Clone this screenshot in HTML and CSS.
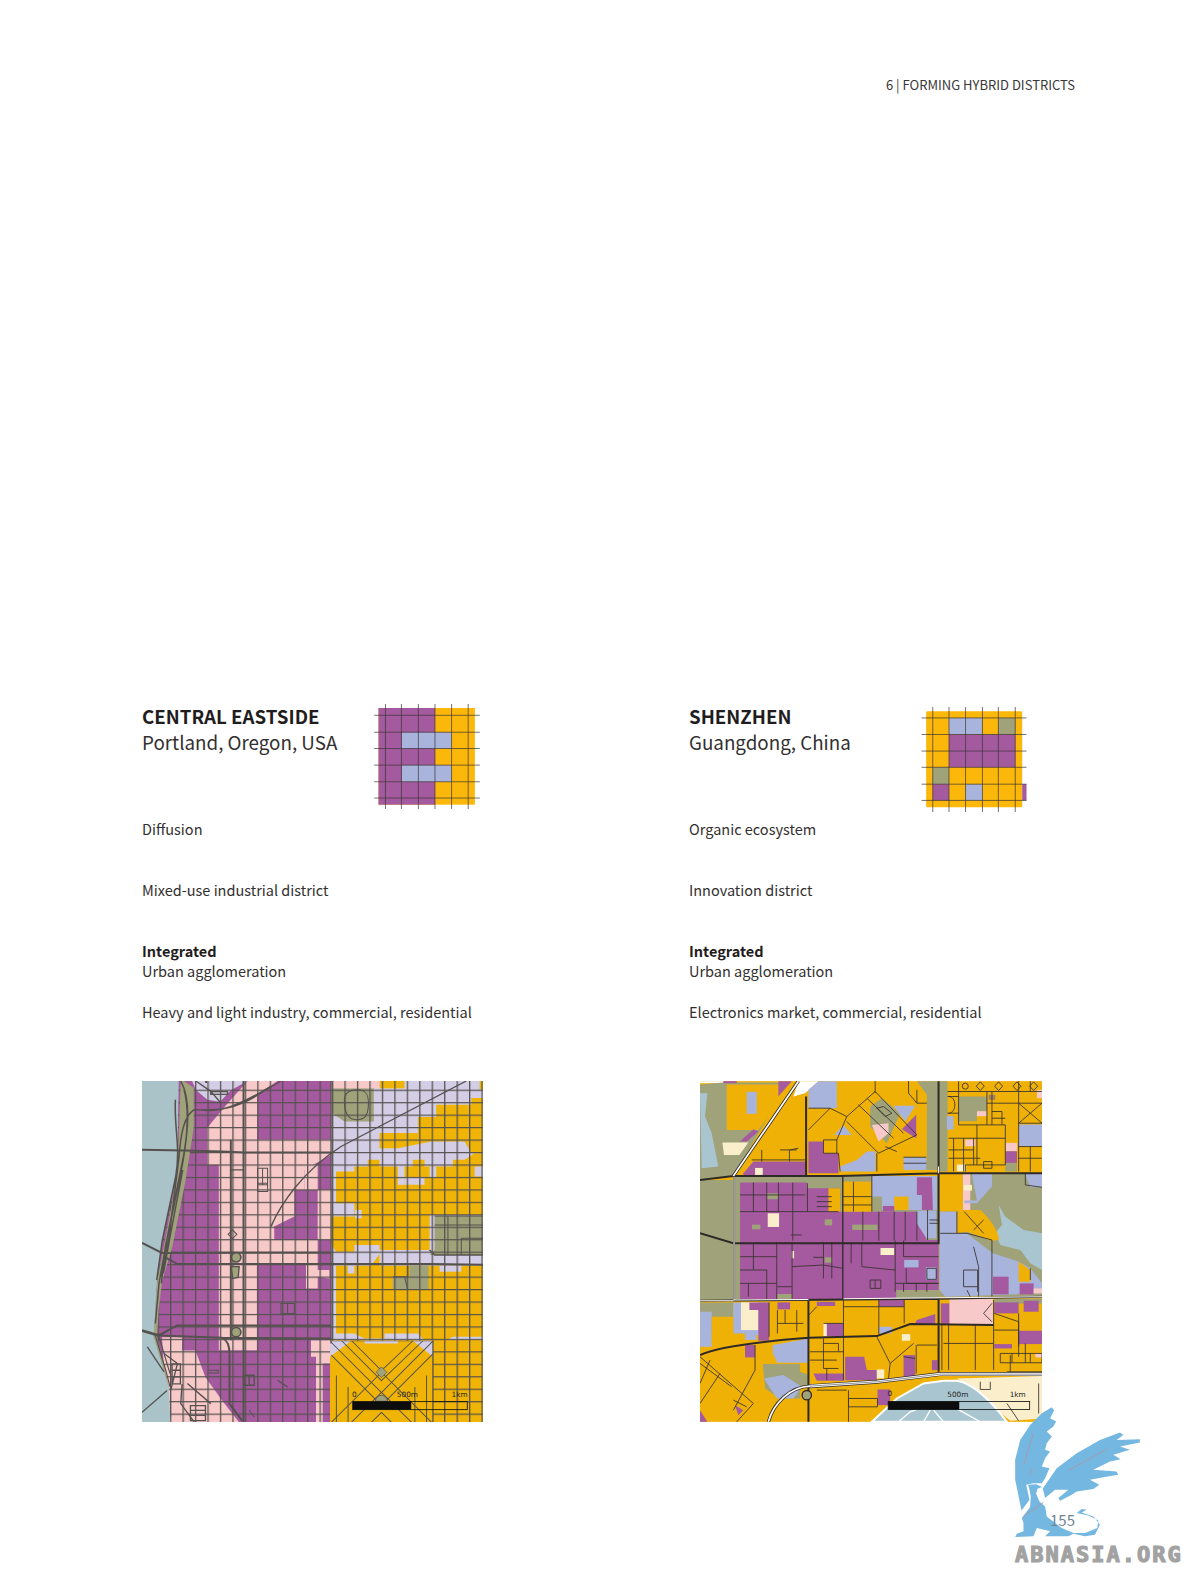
FILE: index.html
```html
<!DOCTYPE html>
<html lang="en">
<head>
    <meta charset="UTF-8">
    <title>6 | Forming Hybrid Districts</title>
    <link rel="stylesheet" href="styles.css">
</head>
<body>
    <div class="page">
        <div class="running-head">6 | FORMING HYBRID DISTRICTS</div>
        <div class="cases">
            <div class="case">
                <div class="case-head">
                    <div class="case-title">
                        <h2>CENTRAL EASTSIDE</h2>
                        <div class="place">Portland, Oregon, USA</div>
                    </div>
                    <svg class="matrix" viewBox="732 42 318 316">
                        <rect class="c-yellow" x="745" y="54" width="290" height="291"/>
                        <rect class="c-purple" x="745" y="54" width="170" height="291"/>
                        <rect class="c-blue" x="815" y="127" width="150" height="49"/>
                        <rect class="c-blue" x="815" y="226" width="150" height="50"/>
                        <path class="matrix-lines" d="M766 42V358M814 42V358M865 42V358M915 42V358M965 42V358M1015 42V358M732 76H1050M732 127H1050M732 176H1050M732 226H1050M732 276H1050M732 325H1050"/>
                    </svg>
                </div>
                <div class="case-text">
                    <p class="gap-2">Diffusion</p>
                    <p class="gap-2">Mixed-use industrial district</p>
                    <p class="gap-1"><strong>Integrated</strong><br>Urban agglomeration</p>
                    <p>Heavy and light industry, commercial, residential</p>
                </div>
                <svg class="map" viewBox="34 34 1021 1021">
                    <defs>
                        <pattern id="streets" patternUnits="userSpaceOnUse" x="6" y="22.7" width="37.3" height="37.3">
                            <path d="M2 0V37.3M0 2H37.3" fill="none" stroke="#55514f" stroke-width="3.8"/>
                        </pattern>
                        <clipPath id="star-clip"><rect x="597" y="812" width="310" height="243"/></clipPath>
                    </defs>
                    <rect x="34" y="34" width="1021" height="1021" fill="#efb406"/>
                    <!-- lavender and yellow east of the avenue -->
                    <rect x="600" y="34" width="455" height="776" fill="#d3cee5"/>
                    <g fill="#efb406">
                        <path d="M745 34H820V56H745Z"/>
                        <path d="M1045 34H1055V60H1045Z"/>
                        <path d="M745 190H860V142H915V105H1020V85H1055V250H1020L1000 215H900L800 235H745Z"/>
                        <path d="M615 305H670V290H710V270H745V290H800V325H820V345H880V322H820V290H845V270H880V290H965V270H1000L1030 250H1055V435H895V540H745V525H670V545H615L600 520V440H670V400H615Z"/>
                        <path d="M615 587H650V610H670V587H720L745 552V587H1055V605H1055V800H965L945 810H880L860 790H760V805H700L670 790H615Z"/>
                        <path d="M1000 270H1055V300H1000Z"/>
                        <path d="M905 810H1055V1055H905Z"/>
                    </g>
                    <g fill="#d3cee5">
                        <path d="M800 325H820V345H800Z"/>
                        <path d="M895 290H915V322H895Z"/>
                        <path d="M672 420H692V445H672Z"/>
                        <path d="M1030 290H1055V320H1030Z"/>
                        <path d="M925 587H990V605H925Z"/>
                    </g>
                    <path d="M910 438H1055V555H895L910 540Z" fill="#a0a27a"/>
                    <path d="M835 587H892V658H785V620H835Z" fill="#a0a27a"/>
                    <path d="M602 56H728V155H640L602 130Z" fill="#a0a27a"/>
                    <path d="M600 34H745V56H600Z" fill="#f7c9c8"/>
                    <!-- purple ground west of the avenue, pink over it -->
                    <rect x="34" y="34" width="566" height="1021" fill="#a55a9f"/>
                    <path d="M184 34H350L300 62L268 96L230 90L196 62Z" fill="#d3cee5"/>
                    <path d="M350 34H440L379 74V210H600V255L520 300V360H490V440L430 470V510H560V600H595V625L560 620V655H525V585H378V840H264V285H229V175L262 134L300 90Z" fill="#f7c9c8"/>
                    <path d="M490 285H560V360H520V300Z" fill="#f7c9c8"/>
                    <path d="M560 360H600V510H560Z" fill="#f7c9c8"/>
                    <path d="M94 801H154V841H194L224 921L274 991L324 1055H110L100 900Z" fill="#f7c9c8"/>
                    <path d="M540 810H597V880H575V1055H555V860H540Z" fill="#f7c9c8"/>
                    <rect x="34" y="34" width="1021" height="1021" fill="url(#streets)"/>
                    <!-- star of diagonal streets -->
                    <rect x="597" y="812" width="308" height="243" fill="#efb406"/>
                    <path d="M597 812H660L597 860ZM905 812H845L905 860ZM700 812H800V820H700Z" fill="#d3cee5"/>
                    <g clip-path="url(#star-clip)" fill="none" stroke="#55514f" stroke-width="3">
                        <path d="M631 811L751 931L876 811M601 817L751 967L905 813M661 811L751 901L846 811M601 855L751 1005L905 851"/>
                        <path d="M751 906L601 1056M751 906L901 1056M751 966L661 1056M751 966L841 1056M751 1026L721 1056M751 1026L781 1056"/>
                        <path d="M616 916V1055M651 950V1055M886 916V1055M851 950V1055M597 812H905"/>
                    </g>
                    <path d="M905 812V1055" stroke="#55514f" stroke-width="3.5"/>
                    <path d="M751 890L767 906L751 922L735 906Z" fill="#a0a27a" stroke="#55514f" stroke-width="2"/>
                    <path d="M733 993A18 18 0 0 1 769 993Z" fill="#a0a27a" stroke="#55514f" stroke-width="2.5"/>
                    <!-- river and its bank -->
                    <path d="M159 34L189 54V174L164 334L124 534L94 634L84 720L79 801L115 950H100L68 810L80 630L105 500L140 310L150 34Z" fill="#a0a27a"/>
                    <path d="M34 34H144L139 314L94 514L79 634L69 801L114 951L119 1055H34Z" fill="#a9c3c9"/>
                    <path d="M150 34C182 90 172 200 150 300L110 500L85 640L74 760M160 60C176 120 170 220 146 330L104 530L92 640M134 90C130 180 150 230 135 320L95 510L78 630M190 120C160 140 150 190 145 260L115 500L92 620M156 300L118 500L98 610" fill="none" stroke="#55514f" stroke-width="4.5"/>
                    <path d="M72 790L105 900L118 950M82 790L118 910" fill="none" stroke="#55514f" stroke-width="3.5"/>
                    <path d="M34 1026L109 961M50 830L100 905" fill="none" stroke="#55514f" stroke-width="4"/>
                    <!-- main roads -->
                    <g fill="none" stroke="#55514f">
                        <path stroke-width="6" d="M34 240L160 242L275 245L340 248H600M34 519L94 549L600 548M100 560L140 582H900L1055 584M84 796L139 766H600"/>
                        <path stroke-width="8" d="M34 781L84 796"/>
                        <path stroke-width="6" d="M84 796L274 803C290 810 296 830 296 850V1001L334 1051M274 803L600 805"/>
                        <path stroke-width="6" d="M300 210V810M338 34V1055M226 40V34"/>
                        <path stroke-width="4" d="M600 34V820M195 34L240 65L270 100M420 470C450 400 520 300 630 230L1005 34M190 120C240 120 300 130 390 70L450 34M210 120C260 130 320 110 420 50M300 300H338M895 540L910 555H1055M240 66H290V74H240Z"/>
                        <path stroke-width="3" d="M640 92C640 65 660 60 680 60C705 60 712 75 712 100C712 140 700 150 675 150C650 150 640 130 640 92ZM910 438H1055M950 438V555M910 465H1055M990 505H1055M990 505V555M830 587V620L785 620M820 620L830 660M380 295H410V345H380ZM395 295V345M380 340H410V365H380ZM305 480L318 493L305 506L292 493Z"/>
                        <path stroke-width="4" d="M179 1006H224V1051H179ZM179 1020H224M179 1035H224M124 881H149V941H124ZM124 900H149M124 920H149M100 850L140 880L120 960M154 941L150 1000L190 1055M170 940L240 1000M340 915H370V945H340ZM355 915V945M440 930L470 950"/>
                        <path stroke-width="3" d="M232 900H262V908H232M355 1020L370 1040M450 700H490V730H450ZM470 700V730"/>
                    </g>
                    <circle cx="316" cy="562" r="14" fill="#a0a27a" stroke="#55514f" stroke-width="5"/>
                    <path d="M302 590H325L322 622L305 625Z" fill="#a0a27a" stroke="#55514f" stroke-width="4"/>
                    <circle cx="316" cy="786" r="14" fill="#a0a27a" stroke="#55514f" stroke-width="5"/>
                    <!-- scale bar -->
                    <rect x="665" y="994" width="343" height="24" fill="none" stroke="#111" stroke-width="2.5"/>
                    <rect x="665" y="994" width="175" height="24" fill="#0c0c0c"/>
                    <text class="scale" x="663" y="979">0</text>
                    <text class="scale" x="797" y="981">500m</text>
                    <text class="scale" x="961" y="981">1km</text>
                </svg>
            </div>
            <div class="case">
                <div class="case-head">
                    <div class="case-title">
                        <h2>SHENZHEN</h2>
                        <div class="place">Guangdong, China</div>
                    </div>
                    <svg class="matrix matrix-low" viewBox="723 50 317 317">
                        <rect class="c-yellow" x="737" y="63" width="290" height="290" rx="4"/>
                        <rect class="c-blue" x="806" y="83" width="100" height="50"/>
                        <rect class="c-olive" x="955" y="83" width="51" height="50"/>
                        <rect class="c-purple" x="806" y="133" width="200" height="99"/>
                        <rect class="c-olive" x="757" y="232" width="49" height="51"/>
                        <rect class="c-purple" x="757" y="283" width="49" height="49"/>
                        <rect class="c-blue" x="856" y="283" width="51" height="49"/>
                        <rect class="c-purple" x="1027" y="283" width="13" height="49"/>
                        <path class="matrix-lines" d="M757 50V367M806 50V367M856 50V367M907 50V367M955 50V367M1006 50V367M723 83H1040M723 133H1040M723 183H1040M723 232H1040M723 283H1040M723 332H1040"/>
                    </svg>
                </div>
                <div class="case-text">
                    <p class="gap-2">Organic ecosystem</p>
                    <p class="gap-2">Innovation district</p>
                    <p class="gap-1"><strong>Integrated</strong><br>Urban agglomeration</p>
                    <p>Electronics market, commercial, residential</p>
                </div>
                <svg class="map map-inset" viewBox="30 34 1025 1021">
                    <rect x="30" y="34" width="1025" height="1021" fill="#efb106"/>
                    <path d="M30 34H100V40H30Z" fill="#fff"/>
                    <!-- west edge -->
                    <path d="M30 44L100 38H265V60L240 130L130 320L30 330Z" fill="#a0a27a"/>
                    <path d="M30 330H130V690H30Z" fill="#a0a27a"/>
                    <path d="M30 70H52L45 140L65 190L75 240L85 290L35 295Z" fill="#a9c6d0"/>
                    <path d="M110 44H265V100L205 180H110Z" fill="#efb106"/>
                    <path d="M100 34H140V40H100Z" fill="#a55a9f"/>
                    <path d="M170 66H200V132H170Z" fill="#a9b4dc"/>
                    <path d="M150 215L190 178L205 185L170 215Z" fill="#a55a9f"/>
                    <path d="M97 218H175L148 255H102Z" fill="#fbeecb"/>
                    <path d="M265 34H305L265 80Z" fill="#a55a9f"/>
                    <path d="M160 310L190 275H350V315H160Z" fill="#a55a9f"/>
                    <path d="M195 294H218V315H195Z" fill="#fbeecb"/>
                    <path d="M325 34L385 34L345 70L310 80Z" fill="#fff"/>
                    <!-- top centre -->
                    <path d="M355 60L385 34H440V115H355Z" fill="#a9b4dc"/>
                    <path d="M552 34H680L710 75V270L680 300H745V34Z" fill="#a0a27a"/>
                    <path d="M355 215H400V250H445V310H355Z" fill="#a55a9f"/>
                    <path d="M450 290L500 270L530 245H556V305H450Z" fill="#a9b4dc"/>
                    <path d="M640 262H708V300H640Z" fill="#a9b4dc"/>
                    <path d="M540 110L575 85L630 130L590 220L540 170Z" fill="#a0a27a"/>
                    <path d="M545 165L595 160V190L565 215Z" fill="#f7c9c8"/>
                    <path d="M610 108H675L645 155Z" fill="#a9b4dc"/>
                    <path d="M678 135V205L635 178Z" fill="#a55a9f"/>
                    <path d="M432 195L460 165L485 195Z" fill="#a9b4dc"/>
                    <!-- top right block -->
                    <path d="M745 34H772V305H745Z" fill="#a0a27a"/>
                    <path d="M805 80H890V124H860V154H805Z" fill="#a0a27a"/>
                    <path d="M985 164H1055V229H985Z" fill="#a9b4dc"/>
                    <path d="M945 219H980V244H945Z" fill="#f7c9c8"/>
                    <path d="M945 244H980V279H945Z" fill="#a55a9f"/>
                    <path d="M945 279H980V305H945Z" fill="#a0a27a"/>
                    <path d="M825 209H855V229H825Z" fill="#f7c9c8"/>
                    <path d="M860 124H890V139H860Z" fill="#f7c9c8"/>
                    <path d="M800 284H825V304H800Z" fill="#fbeecb"/>
                    <path d="M770 139H790V179H770Z" fill="#a9b4dc"/>
                    <path d="M1040 60H1055V85H1040Z" fill="#f7c9c8"/>
                    <path d="M895 75H915V90H895Z" fill="#a0815c"/>
                    <!-- central superblocks -->
                    <rect x="130" y="318" width="618" height="372" rx="10" fill="#a0a27a"/>
                    <path d="M150 338H350V355H450V425H680V460L708 470V510H745V660H618V665H618V688H306V672H262V688H150Z" fill="#a55a9f"/>
                    <path d="M457 335H545V425H457Z" fill="#efb106"/>
                    <path d="M415 355H450V425H415Z" fill="#efb106"/>
                    <path d="M545 318H740V420H575V380H545Z" fill="#a9b4dc"/>
                    <path d="M680 322H725L728 420H695V375H680Z" fill="#a55a9f"/>
                    <path d="M612 380H655V420H612Z" fill="#efb106"/>
                    <path d="M680 422H738V505H708L680 460Z" fill="#a9b4dc"/>
                    <path d="M578 408H612V425H578Z" fill="#a55a9f"/>
                    <g fill="#a0a27a">
                        <rect x="231" y="370" width="34" height="18"/>
                        <rect x="186" y="464" width="25" height="14"/>
                        <rect x="404" y="448" width="22" height="18"/>
                        <rect x="486" y="464" width="76" height="16"/>
                        <rect x="404" y="562" width="22" height="16"/>
                        <rect x="262" y="672" width="44" height="16"/>
                    </g>
                    <g fill="#fbeecb">
                        <rect x="233" y="430" width="34" height="41"/>
                        <rect x="571" y="534" width="41" height="21"/>
                        <rect x="305" y="543" width="7" height="22"/>
                    </g>
                    <path d="M642 570H685V592H642Z" fill="#a9b4dc"/>
                    <path d="M707 592H738V630H707Z" fill="#a9b4dc"/>
                    <!-- east wetland -->
                    <path d="M748 310H1055V680H748Z" fill="#a0a27a"/>
                    <path d="M748 312H818V425H748Z" fill="#efb106"/>
                    <path d="M818 312H840V420H818Z" fill="#f7c9c8"/>
                    <path d="M820 345H845V362H820Z" fill="#fbeecb"/>
                    <path d="M845 312H905V350L860 400H822V392H860Z" fill="#a9b4dc"/>
                    <path d="M925 405L945 440L1000 480L1055 490V600L1020 580L990 540L930 525L915 490L935 465Z" fill="#a9c6d0"/>
                    <path d="M1005 312H1055V352H1020Z" fill="#a9b4dc"/>
                    <path d="M748 425H800V490H748Z" fill="#a9b4dc"/>
                    <path d="M800 490V425L822 420H870C895 440 930 490 925 510L905 512L830 485Z" fill="#efb106"/>
                    <path d="M748 490L830 490L875 525L908 550L985 575L1020 595L1055 640V670L840 678L765 680L748 660Z" fill="#a9b4dc"/>
                    <path d="M985 575L1020 600V635H985Z" fill="#efb106"/>
                    <path d="M908 620H955V673H908Z" fill="#a55a9f"/>
                    <path d="M988 640H1030V673H988Z" fill="#a55a9f"/>
                    <path d="M1030 655H1055V670H1030Z" fill="#f7c9c8"/>
                    <!-- south half -->
                    <path d="M30 697H130V790H30Z" fill="#a0a27a"/>
                    <path d="M30 725H65V830H30Z" fill="#a9b4dc"/>
                    <path d="M65 740H130V820H65Z" fill="#efb106"/>
                    <path d="M130 697H237V795H200V810H165V790H130Z" fill="#a9b4dc"/>
                    <path d="M153 697H205V780H153Z" fill="#fbeecb"/>
                    <path d="M178 697H237V812H205V720H178Z" fill="#a55a9f"/>
                    <path d="M262 697H300V718H262Z" fill="#a55a9f"/>
                    <path d="M248 825L356 805V878H262L248 850Z" fill="#a9b4dc"/>
                    <path d="M218 882H330V905L356 915V950H330V985H270L225 955Z" fill="#a0a27a"/>
                    <path d="M222 925L280 915L335 950L310 985H260Z" fill="#a9b4dc"/>
                    <path d="M165 825H195V862H165Z" fill="#a55a9f"/>
                    <path d="M405 760H460V798H405Z" fill="#a55a9f"/>
                    <path d="M400 760H410V798H400Z" fill="#fbeecb"/>
                    <path d="M380 695H435V708H380Z" fill="#a55a9f"/>
                    <path d="M566 690H642V710H566Z" fill="#a55a9f"/>
                    <path d="M680 750L735 732V765H672Z" fill="#a55a9f"/>
                    <path d="M566 770H605V790H566Z" fill="#a9b4dc"/>
                    <path d="M635 792H660V812H635Z" fill="#fbeecb"/>
                    <path d="M465 860H522L530 900H560V930H465Z" fill="#a55a9f"/>
                    <path d="M560 898H582V925H560Z" fill="#fbeecb"/>
                    <path d="M640 855H675V920H640Z" fill="#a55a9f"/>
                    <path d="M725 870H742V900H725Z" fill="#a55a9f"/>
                    <path d="M370 910H462V932H380Z" fill="#a55a9f"/>
                    <path d="M752 700H778V762H752Z" fill="#a55a9f"/>
                    <path d="M778 685H908V762H778Z" fill="#f7c9c8"/>
                    <path d="M912 685H1055V700H912Z" fill="#a0a27a"/>
                    <path d="M912 697H985V730H912Z" fill="#a55a9f"/>
                    <path d="M1000 692H1045V725H1000Z" fill="#a55a9f"/>
                    <path d="M985 782H1055V822H985Z" fill="#a55a9f"/>
                    <path d="M912 822H965V835H912Z" fill="#a55a9f"/>
                    <path d="M1035 850H1055V862H1035Z" fill="#f7c9c8"/>
                    <path d="M562 958H600V1005H562Z" fill="#a55a9f"/>
                    <path d="M135 1005L160 1020L145 1035Z" fill="#a55a9f"/>
                    <path d="M30 1020L52 1055H30Z" fill="#a55a9f"/>
                    <!-- bay and cream shore -->
                    <path d="M800 925L1055 918V1045L960 1052Z" fill="#fbeecb"/>
                    <path d="M545 1055L620 985L700 940L760 932H800C850 940 900 990 950 1055Z" fill="#a9c6d0" stroke="#fff" stroke-width="6"/>
                    <path d="M625 1055L660 1025L700 1010M700 1055L720 1020M790 1010L870 1055M730 1020L760 1055" fill="none" stroke="#fff" stroke-width="4"/>
                    <!-- minor streets -->
                    <path fill="none" stroke="#3a3330" stroke-width="2.6" d="M355 115H420L470 140L440 210L400 210V250H445M420 115L355 180M470 140L555 65L680 195L565 250L470 155M505 105L610 205M530 85L640 190M580 110L605 130L585 140L560 115ZM555 34V70M655 34V70L680 100V60M560 250V305M585 230L620 245M710 100L680 100M300 240L325 235M270 240H320M298 240V275M185 270H350M215 240V275M440 210V250M450 305L445 250M640 262H708M640 280H708"/>
                    <path fill="none" stroke="#3a3330" stroke-width="2.6" d="M772 65H1055M772 80H805M890 100H985M772 130H805M805 165H945V285H825V305M805 34V165M890 65V165M860 165V285M905 65V165M985 34V305M1020 34V65M775 205H945M775 240H850M775 265H870M790 205V305M820 205V305M850 205V285M985 230H1055M985 265H1055M1020 230V305M985 100L1055 160M985 160L1055 100M985 100H1055M985 160H1055M870 36L882 49L870 62L858 49ZM925 36L937 49L925 62L913 49ZM980 36L992 49L980 62L968 49ZM1030 36L1042 49L1030 62L1018 49ZM905 125L935 125L935 165M905 145H945M775 80C800 80 800 130 775 130M880 275H905V295H880Z"/>
                    <circle cx="825" cy="49" r="9" fill="none" stroke="#3a3330" stroke-width="2.6"/>
                    <path fill="none" stroke="#3a3330" stroke-width="2.6" d="M150 375H345M150 425H445M190 338V425M230 338V425M265 338V425M308 338V512M352 340V425M380 380H425M380 395H425M380 410H425M518 425V512M566 425V512M612 425V512M645 425V512M680 425V512M302 495H335M190 520V600M150 560H260M260 516V688M230 600V688M150 600H230M175 640V680M150 640H260M262 650H305M305 590L400 585L458 595M306 516V688M400 516V625M425 516V625M370 562H400M483 516V580M515 516V590L615 600M615 512V665M640 512V560M640 560L745 560M648 595V640H745M615 640H745M640 640V665M678 640V665M710 640V665M540 630H572V655H540ZM555 630V655M710 595H738V628H710Z"/>
                    <path fill="none" stroke="#3a3330" stroke-width="2.6" d="M545 318V425M490 335V425M457 380H545M457 405H545M712 420V510M718 450H745M718 460H745M800 425V490M822 425L880 490M850 480L880 450M750 490H830L905 510V680M850 530L865 590V680M820 600H862V650H820ZM830 660L840 680M862 650V665M1020 595V630M1005 312V345L1055 352"/>
                    <path fill="none" stroke="#3a3330" stroke-width="2.6" d="M237 697V800M262 720V790M285 720V760M262 760H340M320 720V785M380 710L356 735M460 690V930M566 690V795M642 690V760M566 710H642M460 710H566M400 760H460M360 845H460M400 805V895H445M400 820H445V845M360 870H440M410 895V930M560 800L600 880M600 880L670 820M600 880L595 925M680 825H740M678 825V910M640 860L675 865M745 690V900M755 765V900M775 765V900M855 765V900M910 690V900M760 820H910M912 730L985 755V860M985 730V830M912 780H985M930 850H1055V878H930ZM965 850V878M1005 820V878M1020 850V878M880 730L905 755M905 700L880 730M960 855V905M950 905H1055M30 860L190 1000L140 1055M60 870L30 940M30 880L125 950M90 910L30 1000M195 825V900L130 1020M130 990L170 1010M475 985H562V1010H475ZM475 960V1055M380 960H470M1045 940V1030M870 935V958H900V935M950 1000L985 1052"/>
                    <!-- main roads -->
                    <g fill="none">
                        <path stroke="#2e2a28" stroke-width="6" d="M132 322V690M30 330L130 318L450 318L745 310H1055M30 490L130 520H745V310M745 34V310M348 80V318M30 692L745 686L1055 680M745 686V905M355 690V1055M30 855C80 830 200 815 356 803L560 798L660 762L910 765"/>
                        <path stroke="#2e2a28" stroke-width="4" d="M458 320V690"/>
                        <path stroke="#fff" stroke-width="3" d="M132 322V690M30 692H130M130 690L355 688M460 686L1055 680M745 290V310"/>
                        <path stroke="#2e2a28" stroke-width="12" d="M360 948L560 935L750 912H1055"/>
                        <path stroke="#fff" stroke-width="8" d="M360 948L560 935L750 912H1055"/>
                        <path stroke="#2e2a28" stroke-width="1.5" d="M360 948L560 935L750 912H1055"/>
                        <path stroke="#2e2a28" stroke-width="10" d="M325 34L130 318M235 1055C250 1000 300 950 360 948"/>
                        <path stroke="#fff" stroke-width="5" d="M325 34L130 318M235 1055C250 1000 300 950 360 948"/>
                    </g>
                    <circle cx="350" cy="975" r="14" fill="#a0a27a" stroke="#2e2a28" stroke-width="4"/>
                    <!-- scale bar -->
                    <rect x="594" y="994" width="424" height="24" fill="none" stroke="#111" stroke-width="2.5"/>
                    <rect x="594" y="994" width="213" height="24" fill="#0c0c0c"/>
                    <text class="scale" x="592" y="977">0</text>
                    <text class="scale" x="771" y="981">500m</text>
                    <text class="scale" x="958" y="981">1km</text>
                </svg>
            </div>
        </div>
        <div class="watermark">
            <svg class="griffin" viewBox="0 0 564 460">
                <path class="griffin-body" d="M64 362L45 270L45 210L60 150L90 105L125 70L155 52L162 62L150 85L168 95L160 110L140 125L155 140L140 160L135 180L150 185L135 205L125 230L148 235L135 265L125 280L100 280L78 285L88 330Z"/>
                <path class="griffin-body" d="M128 296L170 235L230 190L300 150L360 128L370 135L350 150L420 148L420 158L360 170L390 180L340 195L362 208L330 215L280 240L350 245L355 255L310 262L270 270L298 285L280 298L230 305L215 315L180 333L175 325L205 300L165 300L135 325Z"/>
                <path class="griffin-body" d="M65 385L90 352L92 320L88 300L84 285L108 283L126 292L112 297L108 312L118 335L135 350L140 380L165 400L185 415L220 430L255 430L292 415L295 392L265 377L230 370L245 358L260 360L245 368L280 380L300 405L285 435L255 440L220 432L205 440L135 440L150 425L110 415L100 440L45 442L50 432L70 425L70 400Z"/>
                <path d="M100 130L70 225M320 178L205 242M130 338L70 380M95 235L88 255" fill="none" stroke="#a79bab" stroke-width="3"/>
            </svg>
            <span class="folio">155</span>
            <span class="brand">ABNASIA.ORG</span>
        </div>
    </div>
</body>
</html>
```

FILE: styles.css
```css
html, body {
    margin: 0;
    background: #fff;
}
.page {
    position: relative;
    width: 1188px;
    height: 1584px;
    box-sizing: border-box;
    padding: 75px 113px 0 142px;
    overflow: hidden;
    font-family: "Noto Sans CJK SC", "Noto Sans", sans-serif;
    color: #333030;
}
.running-head {
    font-size: 13px;
    line-height: 20px;
    text-align: right;
    color: #3a3838;
}
.cases {
    display: grid;
    grid-template-columns: 547px 1fr;
    margin-top: 608px;
}
.case-head {
    display: flex;
    height: 116px;
}
.case-title {
    width: 232px;
}
h2 {
    margin: 0;
    font-size: 18.7px;
    line-height: 26px;
    font-weight: 700;
    color: #1f1d1d;
}
.place {
    font-size: 18.8px;
    line-height: 26px;
    font-weight: 400;
}
.matrix {
    display: block;
    width: 106px;
    height: 105px;
    margin-top: 1px;
}
.matrix-low {
    margin-top: 4px;
}
.c-yellow { fill: #fbb80a; }
.c-purple { fill: #a35a9e; }
.c-blue { fill: #a9b4dc; }
.c-olive { fill: #a0a27a; }
.matrix-lines {
    fill: none;
    stroke: #3a3436;
    stroke-width: 2.1;
}
.case-text p {
    margin: 0;
    font-size: 14.5px;
    line-height: 20.3px;
}
.case-text strong {
    color: #1f1d1d;
}
.case-text .gap-2 { margin-bottom: 40.6px; }
.case-text .gap-1 { margin-bottom: 20.3px; }
.map {
    display: block;
    width: 341px;
    height: 341px;
    margin-top: 59px;
}
.map-inset {
    width: 342px;
    margin-left: 11px;
}
.scale {
    font-family: "DejaVu Sans", sans-serif;
    font-size: 22px;
    fill: #222;
}
.watermark {
    position: absolute;
    left: 1000px;
    top: 1390px;
    width: 188px;
    height: 194px;
}
.griffin {
    position: absolute;
    left: 0;
    top: 0;
    width: 188px;
    height: 153px;
}
.griffin-body { fill: #74b8e2; }
.folio {
    position: absolute;
    left: 50px;
    top: 120px;
    font-size: 15px;
    line-height: 20px;
    color: #6f8592;
}
.brand {
    position: absolute;
    left: 15px;
    top: 152px;
    font-family: "DejaVu Sans Mono", monospace;
    font-weight: 700;
    font-size: 22px;
    line-height: 26px;
    letter-spacing: 2px;
    -webkit-text-stroke: 1.2px #a2a2a2;
    color: #a2a2a2;
    white-space: nowrap;
}
```
